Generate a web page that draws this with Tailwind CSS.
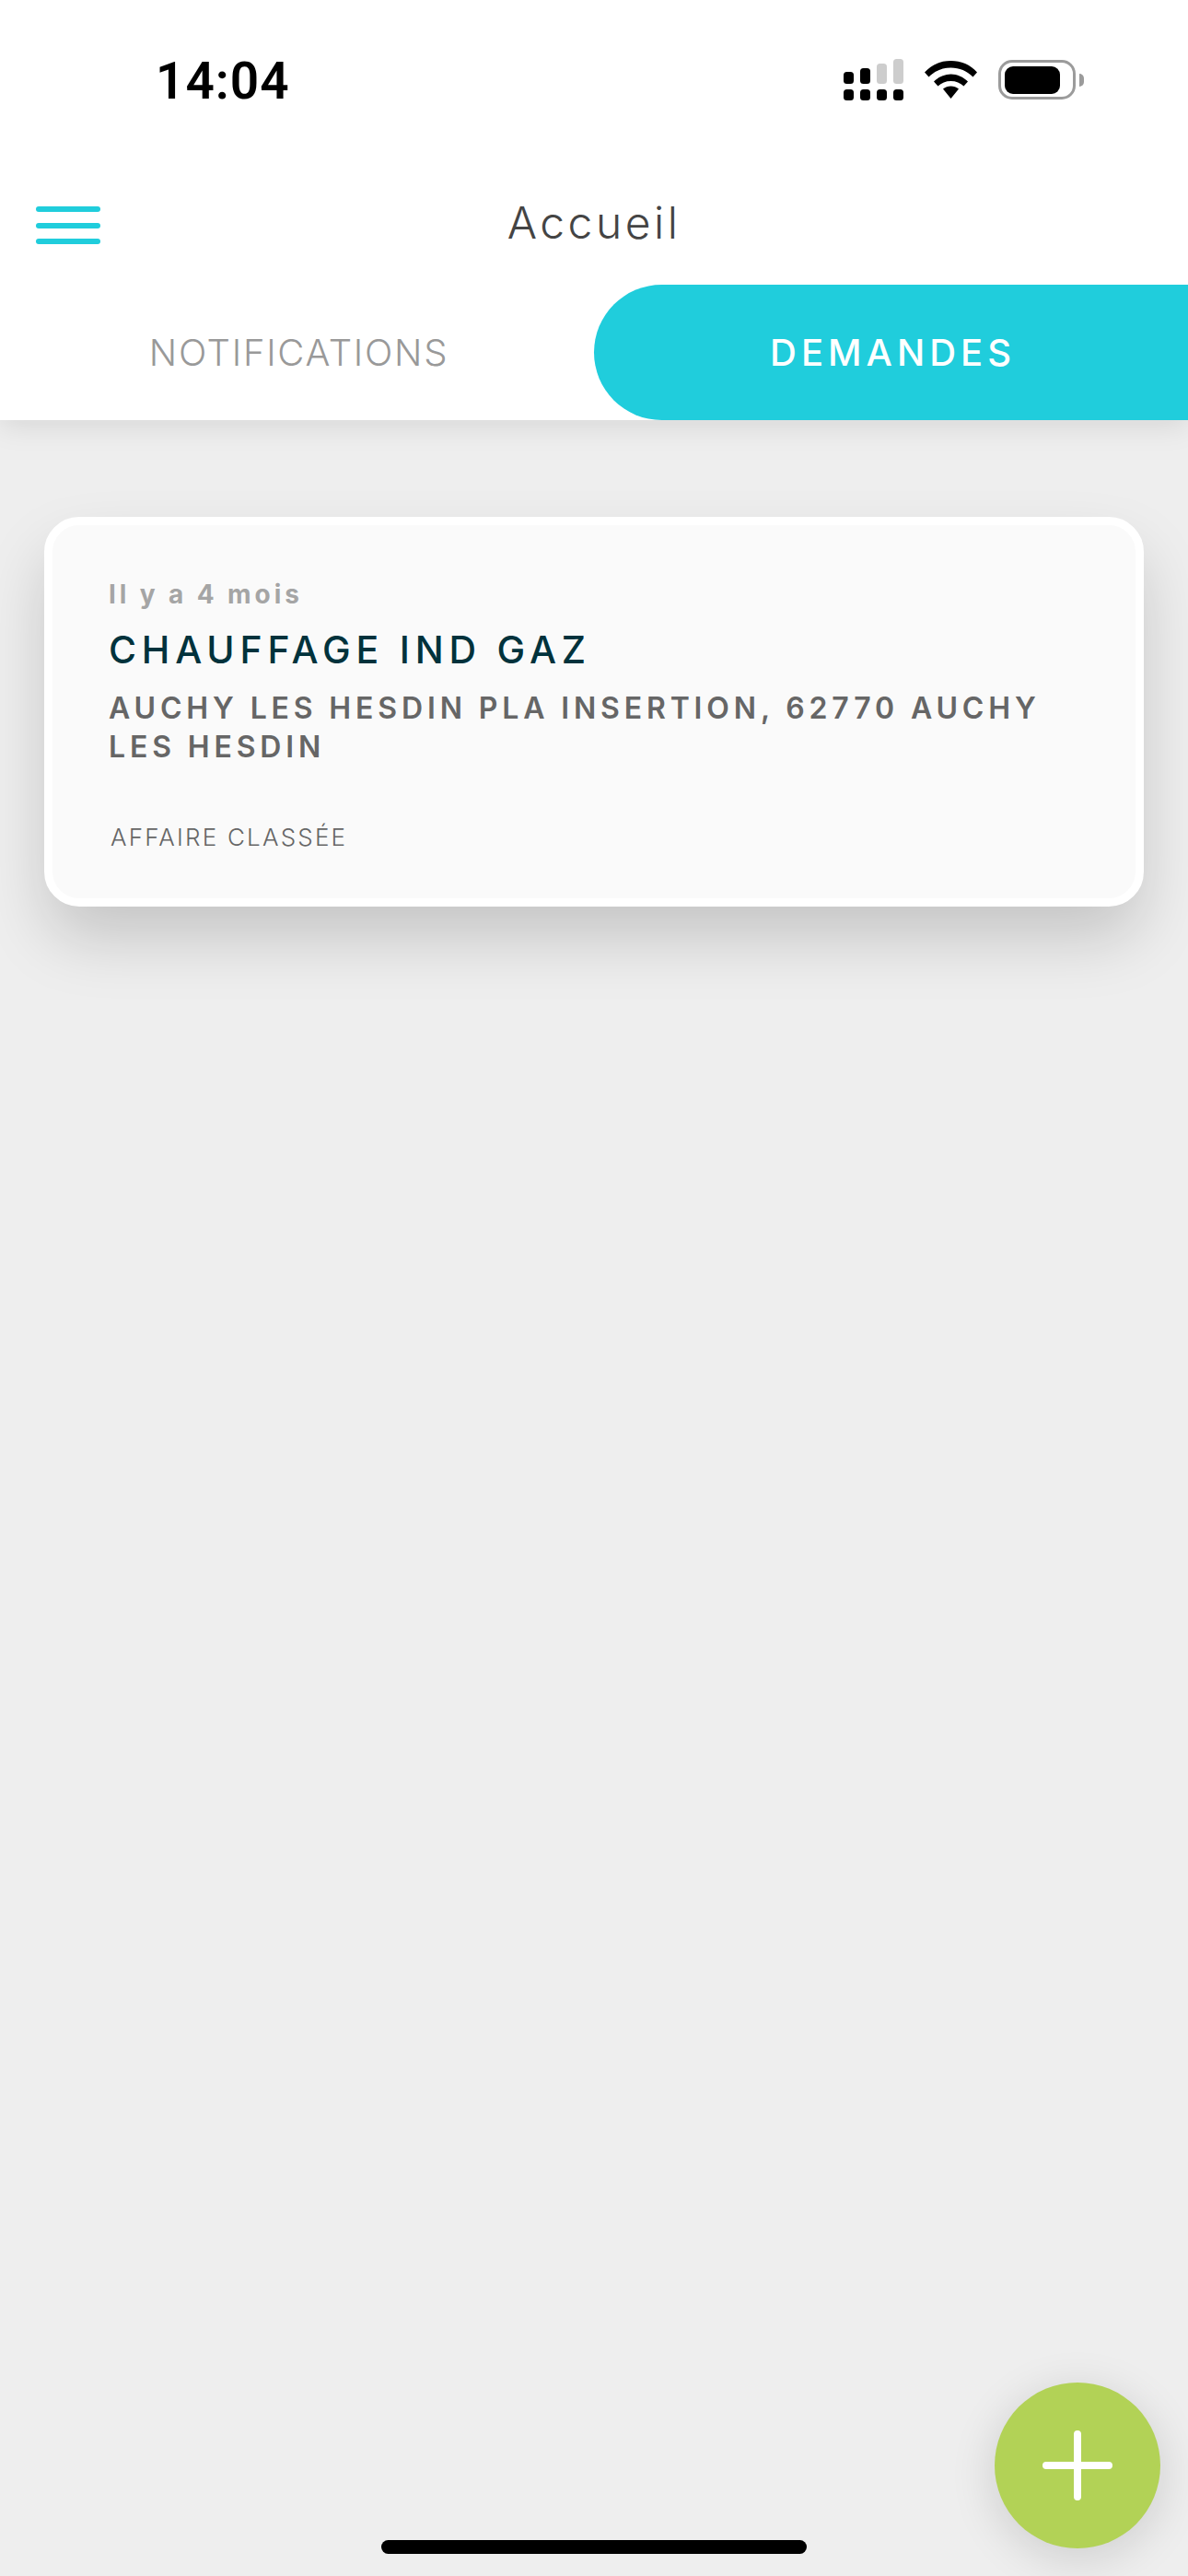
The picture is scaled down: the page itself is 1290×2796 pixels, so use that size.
<!DOCTYPE html>
<html lang="fr">
<head>
  <meta charset="UTF-8" />
  <title>Accueil</title>
  <script src="https://cdn.jsdelivr.net/npm/@tailwindcss/browser@4"></script>
</head>
<body class="bg-[#eeeeee] font-['Inter',sans-serif]">
  <div class="relative w-[1290px] h-[2796px] overflow-hidden bg-[#eeeeee]">

    <header class="bg-white h-[456px] shadow-[0_6px_30px_rgba(0,0,0,0.1)] flex flex-col">
      <!-- status bar -->
      <div class="h-[172px] shrink-0 flex items-start justify-between">
        <span class="ml-[169px] mt-[58px] text-[55px] leading-[60px] font-semibold tracking-[1px] text-black font-['Roboto',sans-serif]">14:04</span>
        <div class="mt-[64px] mr-[113px] flex items-start gap-[23px]">
          <svg width="65" height="45" viewBox="0 0 65 45">
            <rect x="0" y="14" width="11" height="13" rx="3.5" fill="#000"/>
            <rect x="18" y="10" width="11" height="17" rx="3.5" fill="#000"/>
            <rect x="36" y="5" width="11" height="22" rx="3.5" fill="#cdcdcd"/>
            <rect x="54" y="0" width="11" height="27" rx="3.5" fill="#cdcdcd"/>
            <rect x="0" y="33" width="11" height="12" rx="3.5" fill="#000"/>
            <rect x="18" y="33" width="11" height="12" rx="3.5" fill="#000"/>
            <rect x="36" y="33" width="11" height="12" rx="3.5" fill="#000"/>
            <rect x="54" y="33" width="11" height="12" rx="3.5" fill="#000"/>
          </svg>
          <svg width="57" height="42" viewBox="0 0 57 42" class="mt-[2px]">
            <path d="M0 12.500C7.500 4 17.500 0 28.500 0S49.500 4 57 12.500L52.500 17.500C46 11 37.800 7.500 28.500 7.500S11 11 4.500 17.500Z" fill="#000"/>
            <path d="M10 22.500C15 17.500 21.500 14.500 28.500 14.500S42 17.500 47 22.500L42.500 27.500C38.800 24 34 22 28.500 22S18.200 24 14.500 27.500Z" fill="#000"/>
            <path d="M20 30.500C22.500 28.500 25.300 27.500 28.500 27.500S34.500 28.500 37 30.500L28.500 41Z" fill="#000"/>
          </svg>
          <div class="flex items-center">
            <div class="w-[84px] h-[43px] mt-[1px] rounded-[15px] border-[3.5px] border-[#9b9b9b] p-[3.5px] pr-[14px]">
              <div class="w-full h-full rounded-[9px] bg-black"></div>
            </div>
            <div class="w-[5px] h-[14px] ml-[4px] mt-[1px] rounded-r-[5px] bg-[#9b9b9b]"></div>
          </div>
        </div>
      </div>

      <!-- title row -->
      <div class="relative h-[137px] shrink-0 flex items-start justify-center">
        <button class="absolute left-[39px] top-[52px] flex flex-col gap-[11.500px]">
          <span class="block w-[70px] h-[6px] rounded-full bg-[#20cddc]"></span>
          <span class="block w-[70px] h-[6px] rounded-full bg-[#20cddc]"></span>
          <span class="block w-[70px] h-[6px] rounded-full bg-[#20cddc]"></span>
        </button>
        <h1 class="mt-[44px] text-[48px] leading-[52px] font-light tracking-[3.500px] text-[#444444]">Accueil</h1>
      </div>

      <!-- tabs -->
      <nav class="h-[147px] shrink-0 grid grid-cols-2">
        <div class="flex items-center justify-center pl-[4px] text-[40px] font-light tracking-[1.7px] text-[#999999]">NOTIFICATIONS</div>
        <div class="flex items-center justify-center pl-[4px] rounded-l-[74px] bg-[#20cddc] text-[40px] font-medium tracking-[5px] text-white">DEMANDES</div>
      </nav>
    </header>

    <main class="px-[48px] pt-[105px]">
      <article class="h-[423px] rounded-[38px] border-[9px] border-white bg-[#fafafa] pl-[61px] pr-[40px] pt-[56px] shadow-[0_36px_70px_-4px_rgba(0,0,0,0.18)]">
        <p class="text-[28px] leading-[38px] font-bold tracking-[3.900px] text-[#a5a5a5]">Il y a 4 mois</p>
        <h2 class="mt-[15px] text-[41px] leading-[52px] font-medium tracking-[5.800px] text-[#00323c]">CHAUFFAGE IND GAZ</h2>
        <p class="mt-[17px] text-[32px] leading-[42px] font-semibold tracking-[4.850px] text-[#666666]">AUCHY LES HESDIN PLA INSERTION, 62770 AUCHY LES HESDIN</p>
        <p class="mt-[59px] ml-[2px] text-[26px] leading-[36px] font-light tracking-[2.2px] text-[#666666]">AFFAIRE CLASSÉE</p>
      </article>
    </main>

    <!-- add button -->
    <button class="absolute left-[1080px] top-[2586px] w-[180px] h-[180px] rounded-full bg-[#b2d256] flex items-center justify-center shadow-[0_10px_50px_rgba(0,0,0,0.14)]">
      <svg width="76" height="76" viewBox="0 0 76 76">
        <path d="M4 38H72M38 4V72" stroke="#fff" stroke-width="8" stroke-linecap="round" fill="none"/>
      </svg>
    </button>

    <!-- home indicator -->
    <div class="absolute left-[414px] top-[2757px] w-[462px] h-[15px] rounded-full bg-black"></div>
  </div>
</body>
</html>
